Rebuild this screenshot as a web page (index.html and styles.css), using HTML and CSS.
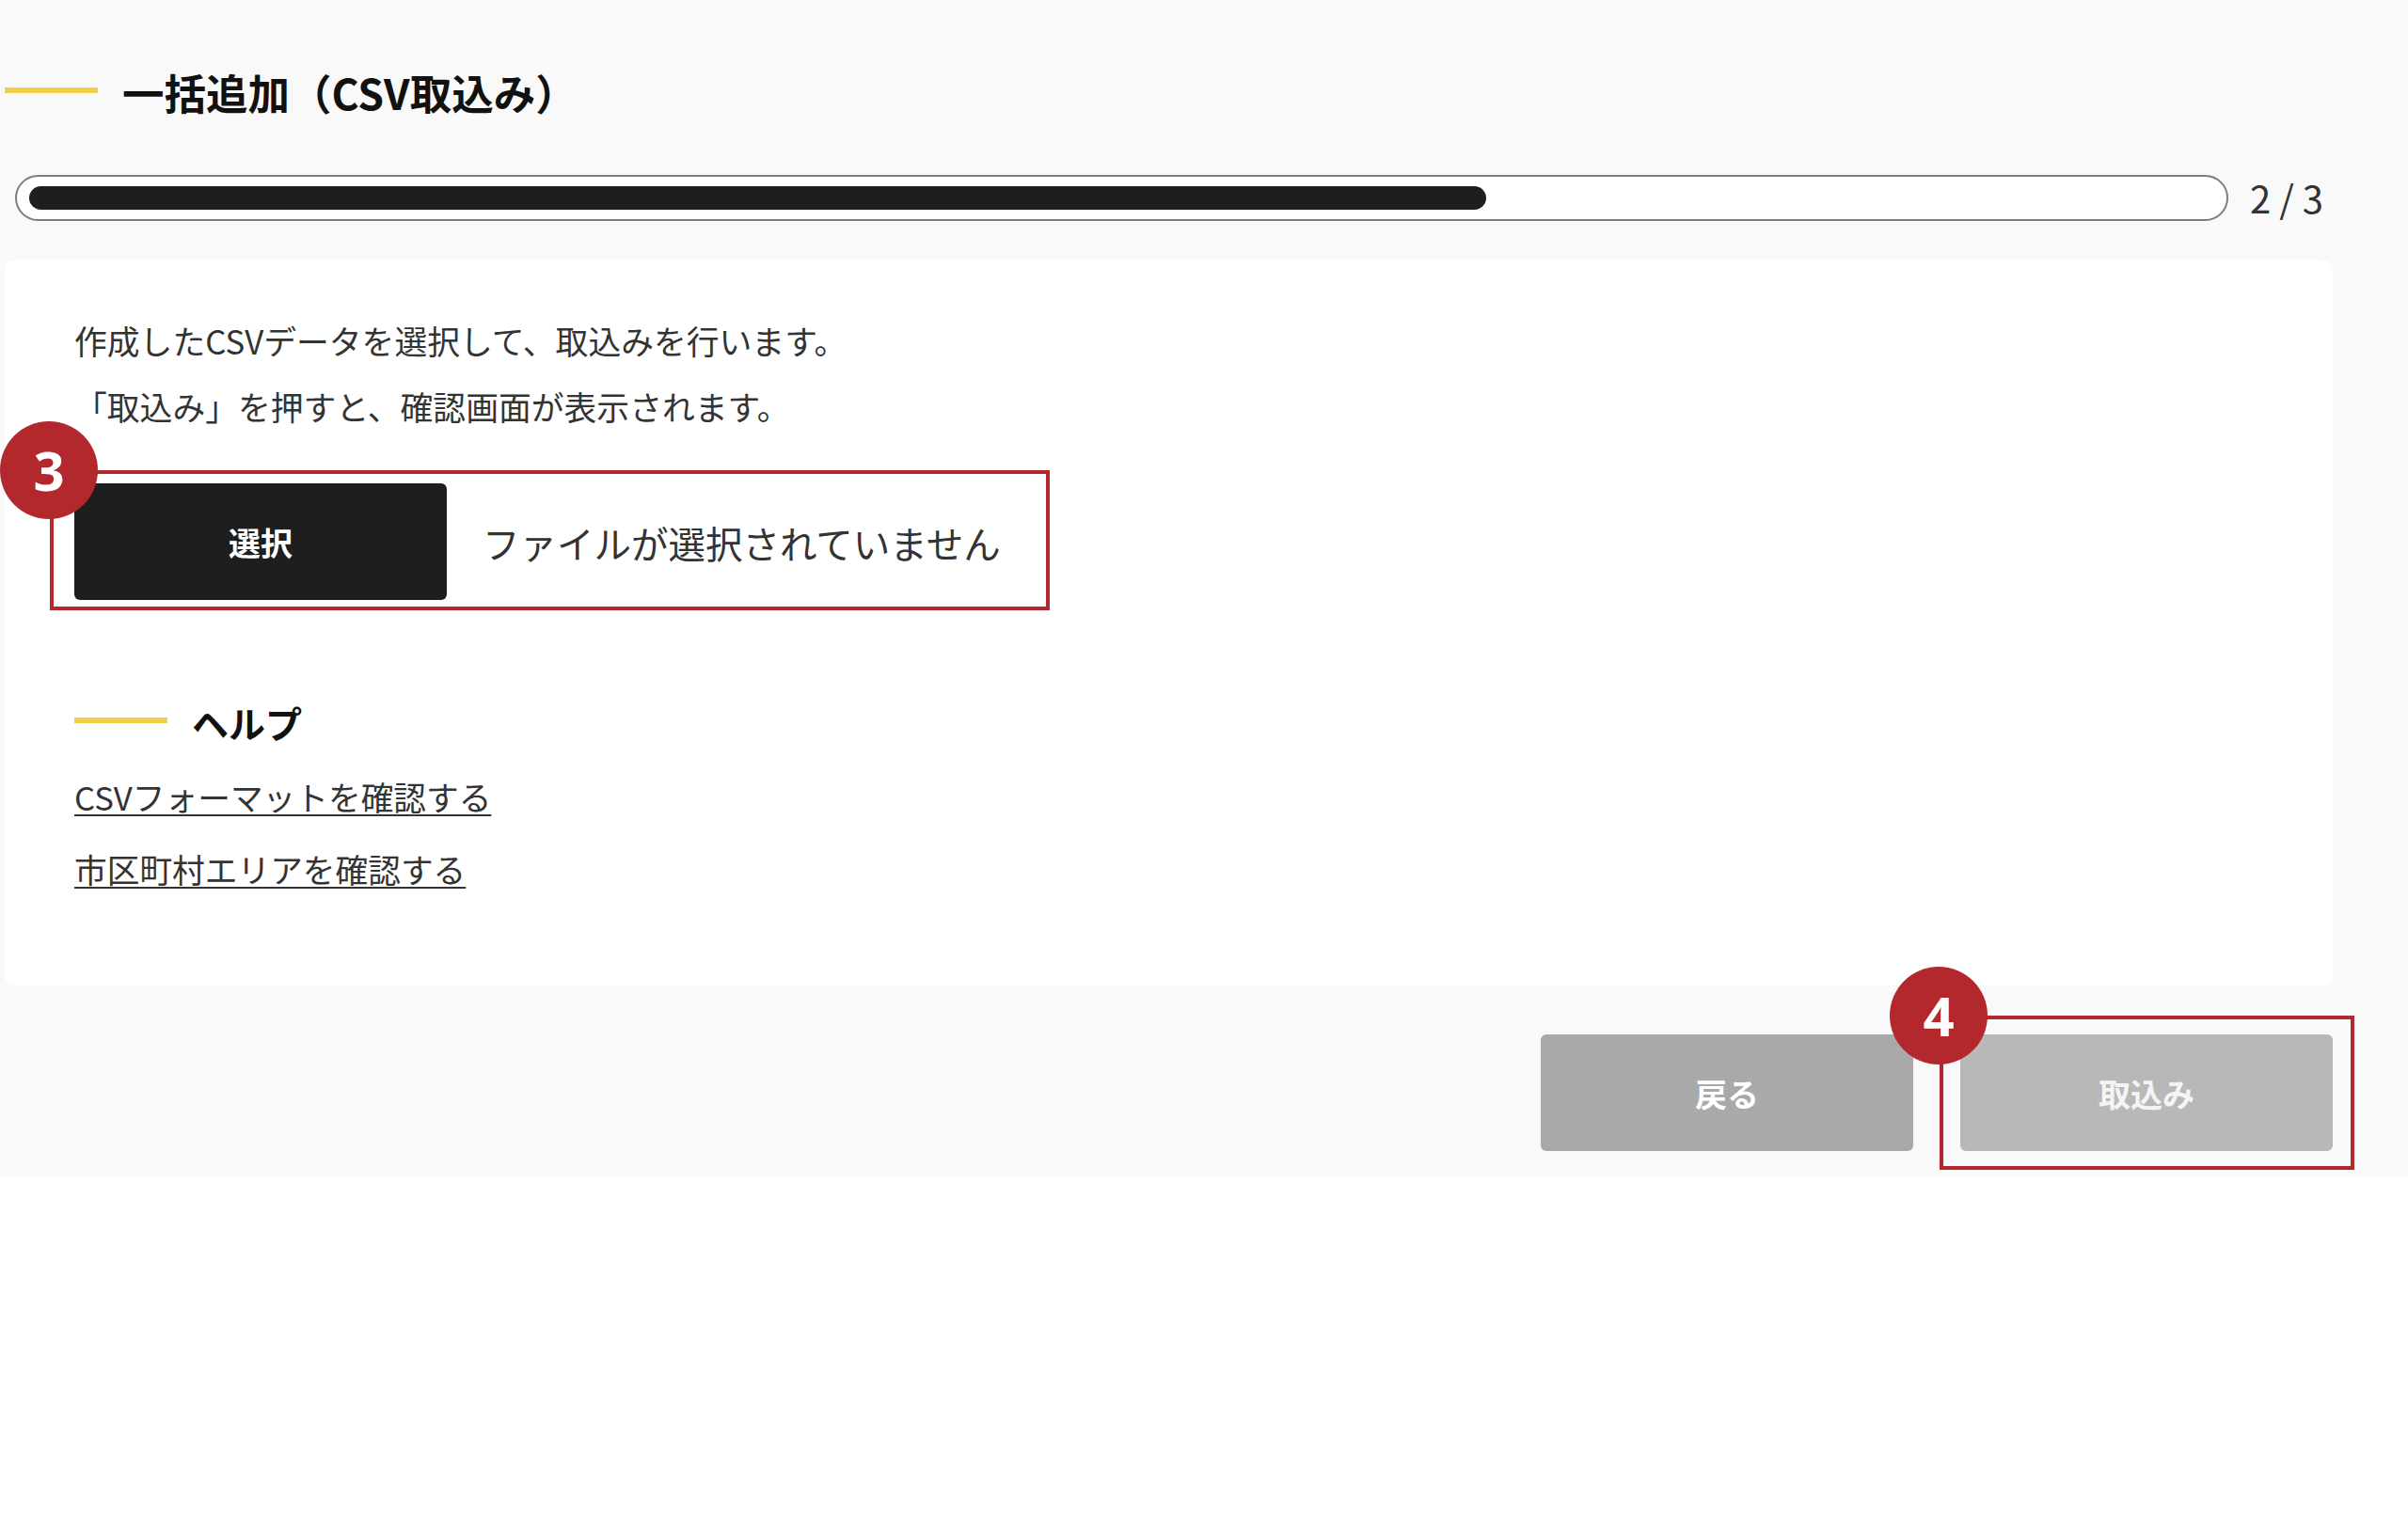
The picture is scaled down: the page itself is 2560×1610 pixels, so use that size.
FILE: index.html
```html
<!DOCTYPE html>
<html lang="ja">
<head>
<meta charset="utf-8">
<title>一括追加（CSV取込み）</title>
<link rel="stylesheet" href="styles.css">
</head>
<body>
<div class="page">
  <h1 class="title"><span class="title-bar"></span><span class="title-text">一括追加（CSV取込み）</span></h1>

  <div class="progress-row">
    <div class="progress">
      <div class="progress-fill" style="width: 66.67%"></div>
    </div>
    <div class="progress-count">2 / 3</div>
  </div>

  <section class="card">
    <p class="lead">作成したCSVデータを選択して、取込みを行います。</p>
    <p class="lead">「取込み」を押すと、確認画面が表示されます。</p>

    <div class="file-row">
      <button class="btn btn-select" type="button">選択</button>
      <span class="file-name">ファイルが選択されていません</span>
      <div class="annot annot-file"><span class="badge">3</span></div>
    </div>

    <h2 class="sub-title"><span class="title-bar"></span><span>ヘルプ</span></h2>
    <div class="links">
      <a class="link" href="#">CSVフォーマットを確認する</a>
      <a class="link" href="#">市区町村エリアを確認する</a>
    </div>
  </section>

  <div class="actions">
    <button class="btn btn-back" type="button">戻る</button>
    <div class="import-wrap">
      <button class="btn btn-import" type="button">取込み</button>
      <div class="annot annot-import"><span class="badge">4</span></div>
    </div>
  </div>
</div>
</body>
</html>
```

FILE: styles.css
```css
* {
  box-sizing: border-box;
}

html, body {
  margin: 0;
  padding: 0;
  background: #ffffff;
}

body {
  font-family: "Noto Sans CJK JP", "Noto Sans", sans-serif;
  color: #333333;
}

.page {
  background: #f9f9f9;
  padding: 68px 80px 27px 5px;
}

.title {
  display: flex;
  align-items: center;
  gap: 26px;
  margin: 0;
  height: 60px;
  font-size: 44.5px;
  line-height: 60px;
  font-weight: 700;
  color: #111111;
}

.title-bar {
  display: block;
  width: 99px;
  height: 6px;
  background: #f2cf4b;
  flex: none;
  margin-top: -5px;
}

.progress-row {
  display: flex;
  align-items: center;
  gap: 23px;
  margin-top: 58px;
  padding: 0 10px 0 11px;
}

.progress {
  flex: 1;
  height: 49px;
  border: 2px solid #7d7d7d;
  border-radius: 25px;
  background: #ffffff;
  padding: 10px 13px;
}

.progress-fill {
  height: 25px;
  background: #1e1e1e;
  border-radius: 13px;
}

.progress-count {
  font-size: 40px;
  line-height: 49px;
  color: #333333;
  white-space: nowrap;
  font-weight: 400;
}

.card {
  margin-top: 42px;
  background: #ffffff;
  border-radius: 10px;
  padding: 50px 74px 85px;
}

.lead {
  margin: 0;
  font-size: 34.8px;
  line-height: 70px;
  color: #333333;
}

.file-row {
  position: relative;
  display: flex;
  align-items: center;
  margin-top: 47px;
  height: 124px;
}

.btn {
  font-family: "Noto Sans CJK JP", "Noto Sans", sans-serif;
  font-size: 34px;
  font-weight: 700;
  color: #ffffff;
  border: none;
  border-radius: 6px;
  width: 396px;
  height: 124px;
  padding: 0;
  cursor: pointer;
}

.btn-select {
  background: #1e1e1e;
}

.file-name {
  margin-left: 38px;
  font-size: 39.5px;
  color: #333333;
}

.annot {
  position: absolute;
  border: 4px solid #b3282d;
  pointer-events: none;
}

.annot-file {
  left: -26px;
  top: -14px;
  width: 1063px;
  height: 149px;
}

.badge {
  position: absolute;
  left: -57px;
  top: -56px;
  width: 104px;
  height: 104px;
  border-radius: 50%;
  background: #b3282d;
  color: #ffffff;
  font-family: "Noto Sans", "Roboto", sans-serif;
  font-weight: 700;
  font-size: 58px;
  line-height: 104px;
  text-align: center;
}

.sub-title {
  display: flex;
  align-items: center;
  gap: 26px;
  margin: 103px 0 0;
  height: 54px;
  font-size: 39px;
  line-height: 54px;
  font-weight: 700;
  color: #111111;
}

.links {
  margin-top: 14px;
  display: flex;
  flex-direction: column;
  align-items: flex-start;
}

.link {
  font-size: 34.7px;
  line-height: 77px;
  color: #333333;
  text-decoration: underline;
  text-decoration-thickness: 2px;
  text-underline-offset: 4px;
}

.actions {
  display: flex;
  justify-content: flex-end;
  gap: 50px;
  margin-top: 52px;
}

.btn-back {
  background: #a9a9a9;
}

.btn-import {
  background: #b8b8b8;
  color: #f4f4f4;
}

.import-wrap {
  position: relative;
}

.annot-import {
  left: -22px;
  top: -20px;
  width: 441px;
  height: 164px;
}
```
